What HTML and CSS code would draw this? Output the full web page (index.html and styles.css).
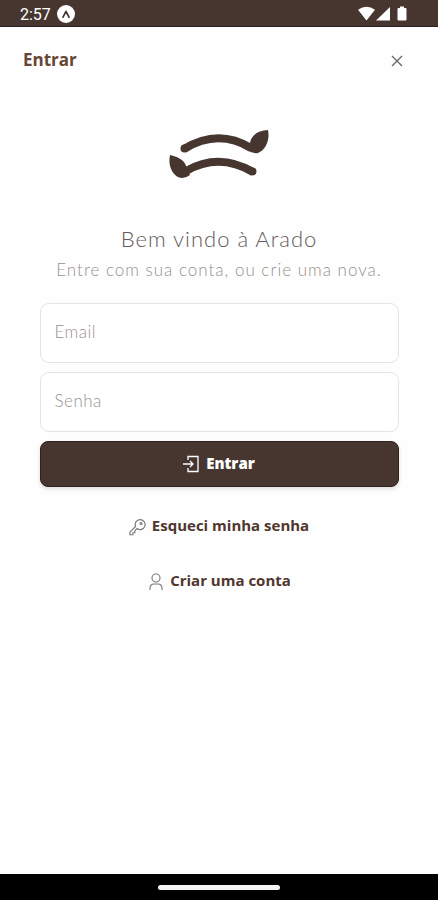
FILE: index.html
```html
<!doctype html>
<html lang="pt-BR">
<head>
<meta charset="UTF-8">
<meta name="viewport" content="width=device-width, initial-scale=1">
<title>Entrar</title>
<link rel="stylesheet" href="styles.css">
</head>
<body>
<div class="status-bar">
<span class="clock">2:57</span>
<svg class="app-badge" viewBox="0 0 18 18"><circle cx="9" cy="9" r="9" fill="#fff"/><path d="M6 12.2 9 6.3l3 5.9" fill="none" stroke="#46362f" stroke-width="1.7" stroke-linecap="round" stroke-linejoin="round"/></svg>
<svg class="signals" viewBox="0 0 52 16" fill="#fff"><path d="M1 3.8Q9.500-2.200 18 3.800L9.500 14.500z"/><path d="M19 14.500 33 1v13.500z"/><path d="M43 .5h4v1.500h1.500q1 0 1 1v10.500q0 1-1 1h-7q-1 0-1-1V3q0-1 1-1H43z"/></svg>
</div>
<div class="header">
<span class="title">Entrar</span>
<svg class="close" viewBox="0 0 12 12"><path d="m1 1 10 10M11 1 1 11"/></svg>
</div>
<div class="content">
<svg class="logo" viewBox="0 0 102 50">
<path d="M16 19Q50-2 83 18M18 41Q51 22 85 42" fill="none" stroke="#46362f" stroke-width="8"/>
<circle cx="16.500" cy="18.500" r="4"/><circle cx="84.500" cy="41.500" r="4"/>
<path d="M100 0C90 0 83 6 82 13L79 20Q84 24 90 23C98 20 102 10 100 0z"/>
<path d="M2 25C12 27 18 32 18.500 38L22 45Q17 49 11 47.500C3 44 0 34 2 25z"/>
</svg>
<div class="welcome">Bem vindo à Arado</div>
<div class="subtitle">Entre com sua conta, ou crie uma nova.</div>
<form class="login">
<input class="email" type="text" placeholder="Email">
<input class="password" type="password" placeholder="Senha">
<button type="button"><svg viewBox="0 0 18 18"><path d="M5 5V1.500h10v15H5V13M0 9h10M7 6l3 3-3 3"/></svg><span>Entrar</span></button>
</form>
<a class="link forgot"><svg viewBox="0 0 18 18"><path d="M8 10.500A5 5 0 1 0 6.500 8.500L.9 14.200v2.500h3v-2h2v-2z"/><circle cx="12" cy="5.500" r="1"/></svg><span>Esqueci minha senha</span></a>
<a class="link create"><svg viewBox="0 0 18 18"><circle cx="9" cy="5" r="4"/><path d="M3 17v-1.500Q3 11 7 11h4q4 0 4 4.500V17"/></svg><span>Criar uma conta</span></a>
</div>
<div class="nav-bar"><div class="handle"></div></div>
</body>
</html>
```
FILE: styles.css
```css
*
{
box-sizing: border-box;
}

body
{
margin: 0;
height: 900px;
display: flex;
flex-direction: column;
background-color: #fefefe;
color: #46362f;
font-family: Lato, sans-serif;
overflow: hidden;
}

.status-bar
{
display: flex;
align-items: center;
height: 27px;
padding: 2px 29px 0 20px;
background-color: #46362f;
border-bottom: 1px solid #2b211e;
color: #fff;
}

.clock
{
font-family: Roboto, sans-serif;
font-size: 16px;
width: 37px;
}

.app-badge
{
width: 18px;
height: 18px;
}

.signals
{
width: 52px;
height: 16px;
margin-left: auto;
}

.header
{
display: flex;
align-items: center;
justify-content: space-between;
height: 64px;
padding: 0 35px 0 23px;
}

.title
{
font-family: "Open Sans", sans-serif;
font-size: 17px;
font-weight: 700;
color: #674634;
}

.close
{
width: 12px;
height: 12px;
margin-top: 3px;
fill: none;
stroke: #666;
stroke-width: 1.3;
}

.content
{
flex: 1;
display: flex;
flex-direction: column;
align-items: center;
}

.logo
{
width: 102px;
height: 50px;
margin-top: 39px;
fill: #46362f;
}

.welcome
{
margin-top: 44px;
font-size: 22px;
line-height: 30px;
font-weight: 300;
letter-spacing: 1px;
color: #625b58;
}

.subtitle
{
margin-top: 4px;
font-size: 17px;
line-height: 24px;
font-weight: 300;
letter-spacing: 1px;
color: #97918d;
}

.login
{
display: flex;
flex-direction: column;
width: 359px;
margin-top: 21px;
}

.login input
{
height: 60px;
margin: 0 0 9px;
padding: 0 14px 4px;
border: 1px solid #e4e4e4;
border-radius: 9px;
background-color: #fff;
font-family: Lato, sans-serif;
font-size: 17px;
font-weight: 300;
}

.login input::placeholder
{
color: #99918e;
letter-spacing: .5px;
}

.login button
{
display: flex;
align-items: center;
justify-content: center;
gap: 5px;
height: 46px;
padding: 0 0 3px;
border: 1px solid #30221e;
border-radius: 8px;
background-color: #46362f;
box-shadow: 0 2px 4px #0002;
color: #fff;
font-family: "Open Sans", sans-serif;
font-size: 15px;
font-weight: 800;
}

svg
{
flex: none;
}

button svg, .link svg
{
width: 18px;
height: 18px;
fill: none;
stroke: currentColor;
stroke-width: 1.3;
margin-top: 3px;
}

.link
{
display: flex;
align-items: center;
gap: 5px;
height: 24px;
font-family: "Open Sans", sans-serif;
font-size: 15px;
font-weight: 700;
color: #50362e;
}

.link svg
{
stroke: #777;
stroke-width: 1.1;
}

.forgot
{
margin-top: 26px;
}

.create
{
margin-top: 31px;
}

.nav-bar
{
display: flex;
align-items: center;
justify-content: center;
height: 26px;
background-color: #000;
}

.handle
{
width: 122px;
height: 5px;
border-radius: 3px;
background-color: #f5f5f5;
}
```
